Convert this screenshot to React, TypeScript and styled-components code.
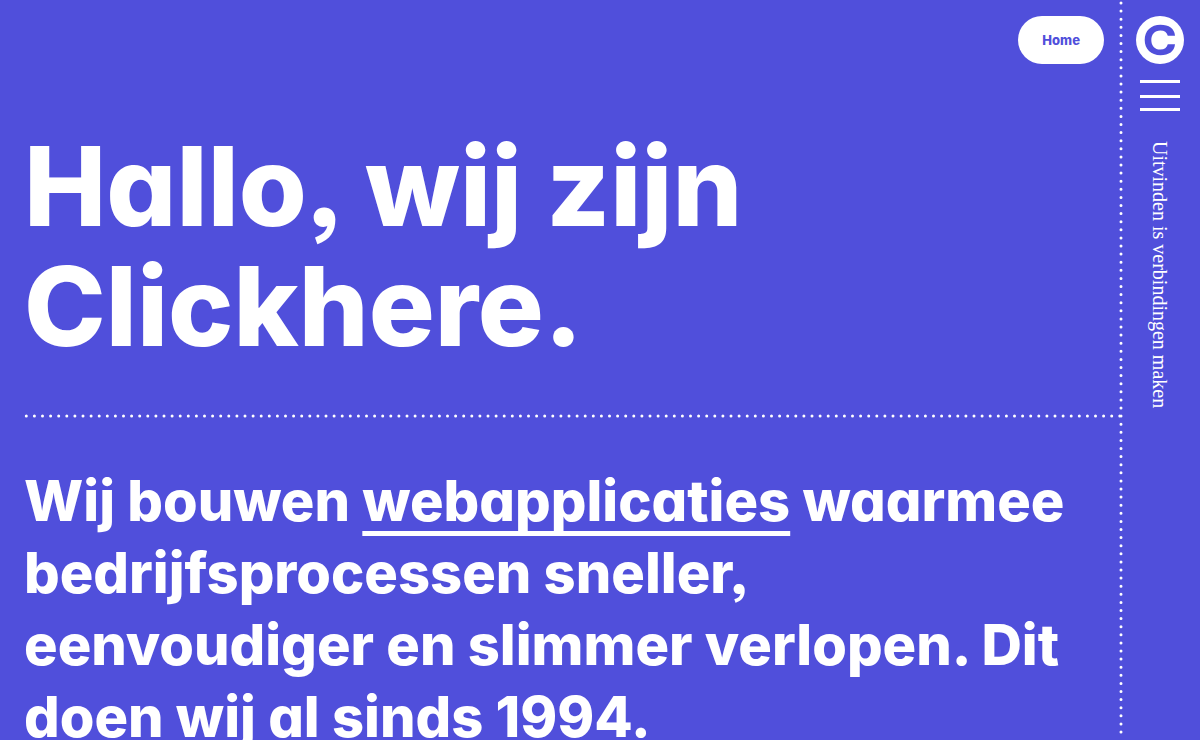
import React from "react";
import styled, { createGlobalStyle } from "styled-components";

const Global = createGlobalStyle`
  * { box-sizing: border-box; }
  body {
    margin: 0;
    background: #504fdb;
    color: #fff;
    font-family: Inter, "Liberation Sans", sans-serif;
    font-feature-settings: "cv11", "ss03";
  }
`;

const Page = styled.div`
  display: grid;
  grid-template-columns: minmax(0, 1fr) 80px;
  min-height: 100vh;
`;

const Main = styled.main`
  display: flex;
  flex-direction: column;
`;

const TopBar = styled.nav`
  display: flex;
  justify-content: flex-end;
  padding: 16px 16px 0;
`;

const Pill = styled.a`
  padding: 0 24px;
  border-radius: 24px;
  background: #fff;
  color: #504fdb;
  font-size: 13px;
  font-weight: 800;
  line-height: 48px;
  text-decoration: none;
`;

const Title = styled.h1`
  max-width: 960px;
  margin: 0;
  padding: 62px 24px 0;
  font-size: 110px;
  font-weight: 800;
  line-height: 120px;
`;

const Rule = styled.svg`
  display: block;
  width: calc(100% - 24px);
  height: 4px;
  margin: 48px 0 0 24px;
`;

const Intro = styled.p`
  margin: 0;
  padding: 47px 24px 48px;
  font-size: 56px;
  font-weight: 800;
  line-height: 72px;
`;

const TextLink = styled.a`
  color: inherit;
  text-decoration: underline;
  text-decoration-thickness: 5px;
  text-decoration-skip-ink: none;
  text-underline-offset: 10px;
`;

const Sidebar = styled.aside`
  position: sticky;
  top: 0;
  display: flex;
  flex-direction: column;
  align-items: center;
  height: 100vh;
  padding-top: 16px;
`;

const Divider = styled.svg`
  position: absolute;
  top: 0;
  left: -1px;
  width: 4px;
  height: 100%;
`;

const Logo = styled.a`
  display: block;
  width: 48px;
  height: 48px;
`;

const MenuButton = styled.button`
  width: 40px;
  height: 31px;
  margin: 16px 0 0;
  padding: 0;
  border: 0;
  background: none;
  color: #fff;
  cursor: pointer;
`;

const Tagline = styled.p`
  margin: 30px 0 0;
  font-family: "Liberation Serif", serif;
  font-size: 20px;
  line-height: 24px;
  white-space: nowrap;
  writing-mode: vertical-rl;
`;

export default function App() {
  return (
    <>
      <Global />
      <Page>
        <Main>
          <TopBar>
            <Pill href="#home">Home</Pill>
          </TopBar>
          <Title>Hallo, wij zijn Clickhere.</Title>
          <Rule aria-hidden="true">
            <line x1="2.3" y1="2" x2="100%" y2="2" stroke="#fff" strokeWidth="3" strokeLinecap="round" strokeDasharray="0 8.1" />
          </Rule>
          <Intro>
            Wij bouwen <TextLink href="#webapplicaties">webapplicaties</TextLink> waarmee
            bedrijfsprocessen sneller, eenvoudiger en slimmer verlopen. Dit doen wij al sinds 1994.
          </Intro>
        </Main>
        <Sidebar>
          <Divider aria-hidden="true">
            <line x1="2" y1="3" x2="2" y2="100%" stroke="#fff" strokeWidth="3" strokeLinecap="round" strokeDasharray="0 8.1" />
          </Divider>
          <Logo href="#home" aria-label="Clickhere">
            <svg width="48" height="48" viewBox="0 0 48 48" aria-hidden="true">
              <circle cx="24" cy="24" r="24" fill="#fff" />
              <path
                d="M39 19.700C38.400 12.500 33 8.800 24.500 8.800C15 8.800 8.700 14.800 8.700 24C8.700 33.200 15 39.200 24.500 39.200C33 39.200 38.400 35.500 39 28.300H31.800C30.800 31.800 28.500 33.600 24.300 33.600C18.700 33.600 15.300 29.800 15.300 24C15.300 18.200 18.700 14.400 24.300 14.400C28.500 14.400 30.800 16.200 31.800 19.700Z"
                fill="#504fdb"
              />
            </svg>
          </Logo>
          <MenuButton type="button" aria-label="Menu">
            <svg width="40" height="31" viewBox="0 0 40 31" fill="currentColor" display="block" aria-hidden="true">
              <rect y="0" width="40" height="3" />
              <rect y="15" width="40" height="3" />
              <rect y="28" width="40" height="3" />
            </svg>
          </MenuButton>
          <Tagline>Uitvinden is verbindingen maken</Tagline>
        </Sidebar>
      </Page>
    </>
  );
}
